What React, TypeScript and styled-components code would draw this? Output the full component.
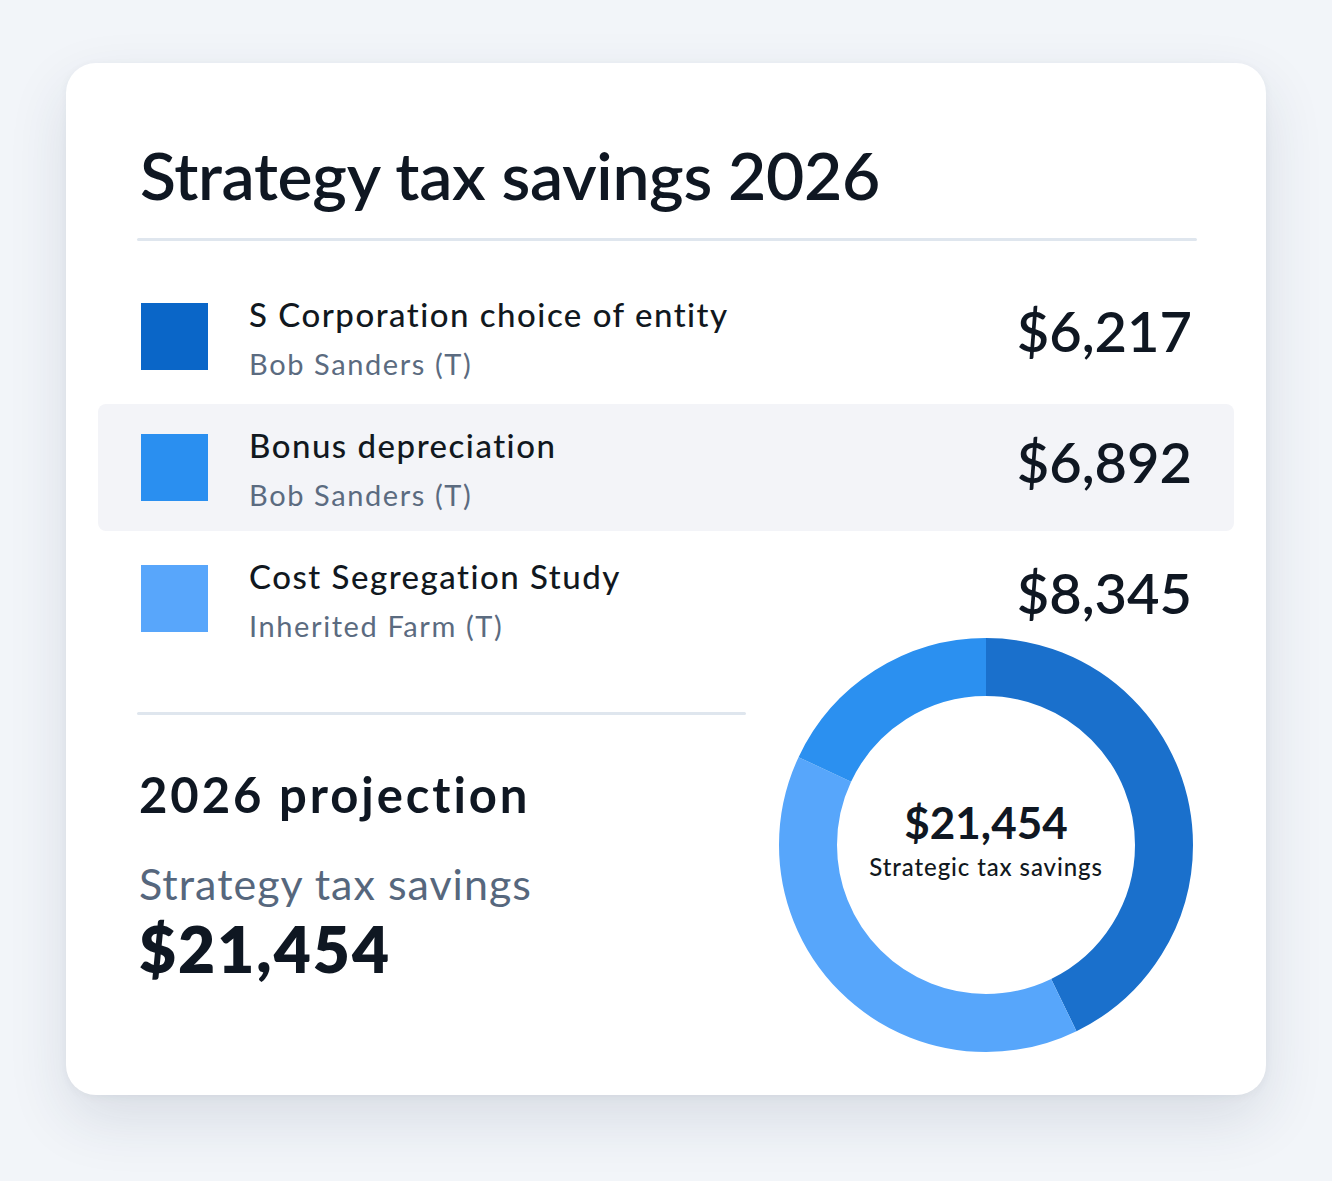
import styled, { createGlobalStyle } from 'styled-components';

const GlobalStyle = createGlobalStyle`
  html, body {
    margin: 0;
    padding: 0;
    background: #f2f5f9;
  }
  body {
    font-family: Lato, "Open Sans", "Liberation Sans", sans-serif;
    color: #0f1722;
  }
`

const Page = styled.div`
  width: 1332px;
  height: 1181px;
  padding: 63px 0 0 66px;
  box-sizing: border-box;
`

const Card = styled.div`
  width: 1200px;
  height: 1032px;
  box-sizing: border-box;
  padding: 72px 69px 0 71px;
  background: #fff;
  border-radius: 30px;
  box-shadow: 0 24px 60px rgba(30, 50, 80, 0.12), 0 2px 8px rgba(30, 50, 80, 0.05);
`

const Title = styled.h1`
  margin: 0 0 0 3px;
  font-size: 66px;
  line-height: 1.2;
  font-weight: 600;
  letter-spacing: -0.3px;
  color: #0f1722;
`

const Divider = styled.div<{ $width?: string }>`
  width: ${p => p.$width ?? '100%'};
  height: 3px;
  background: #dfe6ee;
  border-radius: 2px;
`

const TopDivider = styled(Divider)`
  margin-top: 24px;
`

const List = styled.div`
  display: flex;
  flex-direction: column;
  gap: 4px;
  margin: 32px -37px 0 -39px;
`

const Row = styled.div<{ $active?: boolean }>`
  height: 127px;
  display: flex;
  align-items: center;
  padding: 0 42px 0 43px;
  border-radius: 8px;
  background: ${p => (p.$active ? '#f3f4f8' : 'transparent')};
`

const Swatch = styled.div<{ $color: string }>`
  width: 67px;
  height: 67px;
  flex: none;
  background: ${p => p.$color};
`

const RowText = styled.div`
  flex: 1;
  display: flex;
  flex-direction: column;
  gap: 12px;
  margin-left: 41px;
  margin-top: 2px;
`

const RowTitle = styled.div`
  font-size: 33px;
  line-height: 40px;
  font-weight: 500;
  letter-spacing: 1.5px;
  color: #111820;
`

const RowSub = styled.div`
  font-size: 29px;
  line-height: 36px;
  letter-spacing: 1.6px;
  color: #5b6b80;
`

const Amount = styled.div`
  font-size: 56px;
  line-height: 1;
  font-weight: 600;
  color: #0f1722;
  margin-bottom: 12px;
`

const Bottom = styled.div`
  display: flex;
  justify-content: space-between;
  margin-top: -24px;
`

const Summary = styled.div`
  width: 609px;
  padding-top: 74px;
`

const SummaryHeading = styled.h2`
  margin: 50px 0 0 2px;
  font-size: 49px;
  line-height: 1.2;
  font-weight: 700;
  letter-spacing: 2.9px;
  color: #0f1722;
`

const SummaryLabel = styled.div`
  margin: 34px 0 0 2px;
  font-size: 43px;
  line-height: 1.2;
  letter-spacing: 1px;
  color: #56677d;
`

const SummaryValue = styled.div`
  margin: 4px 0 0 2px;
  font-size: 64px;
  line-height: 1.1;
  font-weight: 800;
  letter-spacing: 2px;
  color: #0f1722;
`

const Donut = styled.div`
  position: relative;
  width: 414px;
  height: 414px;
  margin-right: 4px;
`

const DonutLabel = styled.div`
  position: absolute;
  inset: 0;
  display: flex;
  flex-direction: column;
  align-items: center;
  justify-content: center;
  gap: 4px;
  padding-bottom: 10px;
`

const DonutValue = styled.div`
  font-size: 44px;
  line-height: 1.1;
  font-weight: 700;
  color: #0f1722;
`

const DonutCaption = styled.div`
  font-size: 24px;
  line-height: 1.3;
  font-weight: 500;
  letter-spacing: 0.9px;
  color: #111820;
`

const strategies = [
  { id: 1, color: '#0a66c8', title: 'S Corporation choice of entity', owner: 'Bob Sanders (T)', amount: '$6,217' },
  { id: 2, color: '#2a8ff0', title: 'Bonus depreciation', owner: 'Bob Sanders (T)', amount: '$6,892', active: true },
  { id: 3, color: '#58a6fb', title: 'Cost Segregation Study', owner: 'Inherited Farm (T)', amount: '$8,345' },
]

// ring segments in degrees, clockwise from the top
const segments = [
  { color: '#1a70cc', deg: 154 },
  { color: '#57a6fb', deg: 141 },
  { color: '#2b90f0', deg: 65 },
]

const RADIUS = 178
const CIRC = 2 * Math.PI * RADIUS

const Ring = () => {
  let offset = 0
  return (
    <svg width="414" height="414" viewBox="0 0 414 414">
      <g transform="rotate(-90 207 207)">
        {segments.map((s) => {
          const len = (s.deg / 360) * CIRC
          const el = (
            <circle
              key={s.color}
              cx="207"
              cy="207"
              r={RADIUS}
              fill="none"
              stroke={s.color}
              strokeWidth="58"
              strokeDasharray={`${len} ${CIRC - len}`}
              strokeDashoffset={-offset}
            />
          )
          offset += len
          return el
        })}
      </g>
    </svg>
  )
}

export default function App() {
  return (
    <>
      <GlobalStyle />
      <Page>
        <Card>
          <Title>Strategy tax savings 2026</Title>
          <TopDivider />
          <List>
            {strategies.map((s) => (
              <Row key={s.id} $active={s.active}>
                <Swatch $color={s.color} />
                <RowText>
                  <RowTitle>{s.title}</RowTitle>
                  <RowSub>{s.owner}</RowSub>
                </RowText>
                <Amount>{s.amount}</Amount>
              </Row>
            ))}
          </List>
          <Bottom>
            <Summary>
              <Divider />
              <SummaryHeading>2026 projection</SummaryHeading>
              <SummaryLabel>Strategy tax savings</SummaryLabel>
              <SummaryValue>$21,454</SummaryValue>
            </Summary>
            <Donut>
              <Ring />
              <DonutLabel>
                <DonutValue>$21,454</DonutValue>
                <DonutCaption>Strategic tax savings</DonutCaption>
              </DonutLabel>
            </Donut>
          </Bottom>
        </Card>
      </Page>
    </>
  )
}
